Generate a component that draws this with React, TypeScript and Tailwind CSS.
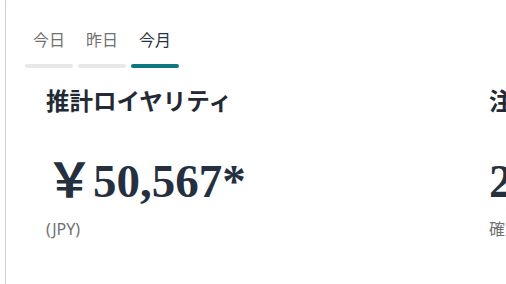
import { useState } from 'react';

const tabs = ['今日', '昨日', '今月'];

const stats = [
  { title: '推計ロイヤリティ', value: '￥50,567*', note: '(JPY)' },
  { title: '注文数', value: '2,345', note: '確定済み' },
];

export default function App() {
  const [active, setActive] = useState(2);

  return (
    <div className="w-[506px] h-[284px] overflow-hidden bg-white pl-[5px]" style={{ fontFamily: '"Noto Sans", "Noto Sans CJK JP", sans-serif' }}>
      <div className="-mt-[4px] h-[300px] w-[700px] rounded-md border border-[#cfcfcf] bg-white pl-[19px] pt-[30px]">
        <div className="flex gap-[5px]">
          {tabs.map((t, i) => (
            <button
              key={t}
              onClick={() => setActive(i)}
              className="flex w-[48px] flex-col items-center"
            >
              <span className={`text-[16px] leading-[26px] ${i === active ? 'text-[#2b3440]' : 'text-[#707070]'}`}>{t}</span>
              <span className={`mt-[11px] h-[4px] w-full rounded-full ${i === active ? 'bg-[#0d7682]' : 'bg-[#e8e8e8]'}`} />
            </button>
          ))}
        </div>

        <div className="mt-[17px] flex pl-[21px]">
          {stats.map((s) => (
            <div key={s.title} className="w-[443px] shrink-0">
              <div className="text-[23.5px] font-bold leading-[32px] text-[#232a35]">{s.title}</div>
              <div
                className="mt-[36px] text-[47px] font-bold leading-[56px] text-[#24303f]"
                style={{ fontFamily: '"Liberation Serif", "Noto Sans CJK JP", serif' }}
              >
                {s.value}
              </div>
              <div className="mt-[10px] text-[16px] leading-[20px] text-[#707070]">{s.note}</div>
            </div>
          ))}
        </div>
      </div>
    </div>
  );
}
